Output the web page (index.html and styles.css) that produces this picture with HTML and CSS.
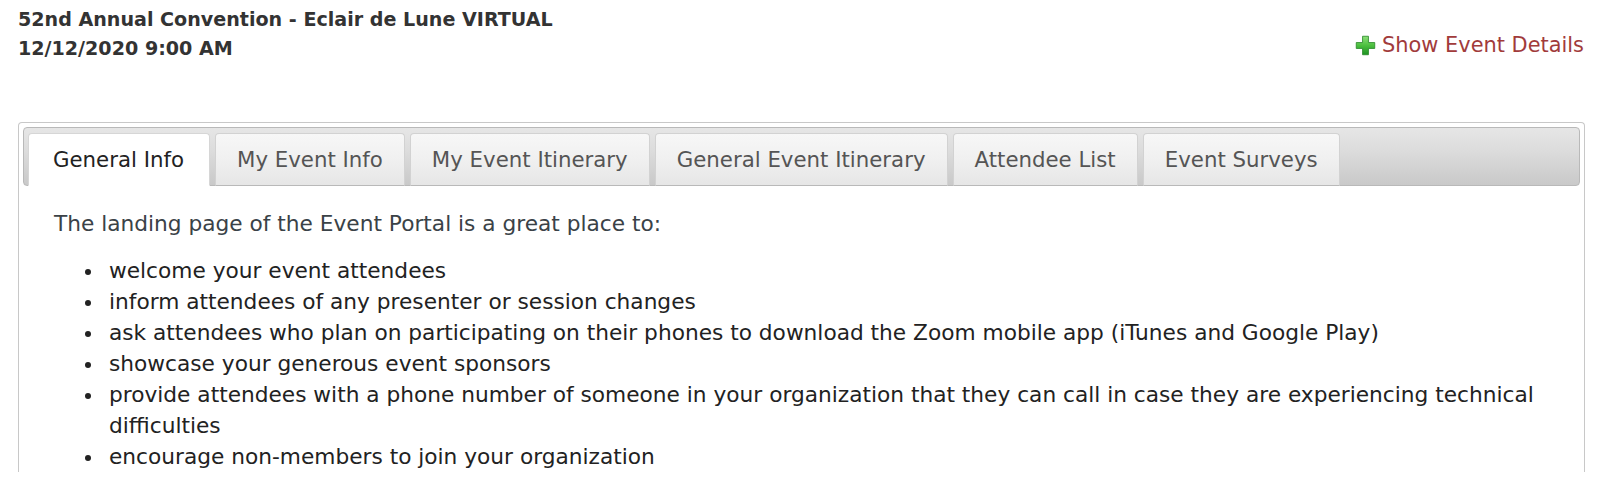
FILE: index.html
```html
<!DOCTYPE html>
<html>
<head>
<meta charset="utf-8">
<title>Event Portal</title>
<link rel="stylesheet" href="styles.css">
</head>
<body>
<header class="event-header">
  <div class="event-title">
    <div>52nd Annual Convention - Eclair de Lune VIRTUAL</div>
    <div>12/12/2020 9:00 AM</div>
  </div>
  <a class="details-link" href="#">
    <svg class="plus-icon" width="21" height="21" viewBox="0 0 20 20">
      <defs>
        <linearGradient id="g" x1="0" y1="0" x2="0" y2="1">
          <stop offset="0" stop-color="#8ee07a"/>
          <stop offset="0.5" stop-color="#4cbf3f"/>
          <stop offset="1" stop-color="#1e9322"/>
        </linearGradient>
      </defs>
      <path d="M7.2 1.2h5.6v6h6v5.6h-6v6h-5.6v-6h-6v-5.6h6z" fill="url(#g)" stroke="#2b8a2b" stroke-width="0.8" stroke-linejoin="round"/>
    </svg>
    <span>Show Event Details</span>
  </a>
</header>

<section class="panel">
  <nav class="tab-bar">
    <a class="tab active" href="#">General Info</a>
    <a class="tab" href="#">My Event Info</a>
    <a class="tab" href="#">My Event Itinerary</a>
    <a class="tab" href="#">General Event Itinerary</a>
    <a class="tab" href="#">Attendee List</a>
    <a class="tab" href="#">Event Surveys</a>
  </nav>
  <div class="tab-content">
    <p class="intro">The landing page of the Event Portal is a great place to:</p>
    <ul class="points">
      <li>welcome your event attendees</li>
      <li>inform attendees of any presenter or session changes</li>
      <li>ask attendees who plan on participating on their phones to download the Zoom mobile app (iTunes and Google Play)</li>
      <li>showcase your generous event sponsors</li>
      <li>provide attendees with a phone number of someone in your organization that they can call in case they are experiencing technical difficulties</li>
      <li>encourage non-members to join your organization</li>
    </ul>
  </div>
</section>
</body>
</html>
```
FILE: styles.css
```css
html, body {
  margin: 0;
  background: #ffffff;
  font-family: "DejaVu Sans", "Liberation Sans", sans-serif;
}

.event-header {
  display: flex;
  justify-content: space-between;
  align-items: flex-start;
  padding: 6px 15px 0 18px;
  height: 122px;
  box-sizing: border-box;
}

.event-title {
  font-weight: 700;
  font-size: 19.1px;
  line-height: 28.5px;
  color: #333333;
}

.details-link {
  display: flex;
  align-items: center;
  gap: 6px;
  margin-top: 26px;
  font-size: 20.9px;
  line-height: 26px;
  color: #a13b3b;
  text-decoration: none;
}

.plus-icon {
  display: block;
}

.panel {
  margin: 0 14px 0 18px;
  border: 1px solid #c8c8c8;
  border-bottom: none;
  border-radius: 4px 4px 0 0;
  padding: 4px 4px 0 4px;
}

.tab-bar {
  display: flex;
  gap: 5px;
  padding: 5px 4px 0 4px;
  height: 59px;
  box-sizing: border-box;
  border: 1px solid #b9b9b9;
  border-radius: 4px;
  background: linear-gradient(to bottom, #e6e6e6 0%, #dcdcdc 40%, #c9c9c9 100%);
  align-items: flex-end;
}

.tab {
  display: flex;
  align-items: center;
  height: 53px;
  box-sizing: border-box;
  padding: 0 21px;
  margin-bottom: -1px;
  border: 1px solid #d2d2d2;
  border-bottom: 1px solid #b9b9b9;
  border-radius: 4px 4px 0 0;
  background: linear-gradient(to bottom, #f7f7f7 0%, #f0f0f0 50%, #e6e6e6 100%);
  font-size: 21.3px;
  color: #555555;
  text-decoration: none;
  white-space: nowrap;
}

.tab.active {
  padding: 0 25px 0 24px;
  background: #ffffff;
  border-color: #d6d6d6;
  border-bottom-color: #ffffff;
  color: #222222;
}

.tab-content {
  padding: 22px 20px 0 31px;
  font-size: 21.7px;
  line-height: 31px;
}

.intro {
  margin: 0 0 16px 0;
  color: #3a4247;
}

.points {
  list-style: none;
  margin: 0;
  padding: 0 0 0 55px;
  color: #222222;
}

.points li::before {
  content: "";
  display: inline-block;
  width: 6px;
  height: 6px;
  border-radius: 50%;
  background: #222222;
  margin-left: -24px;
  margin-right: 18px;
  vertical-align: middle;
}
```
